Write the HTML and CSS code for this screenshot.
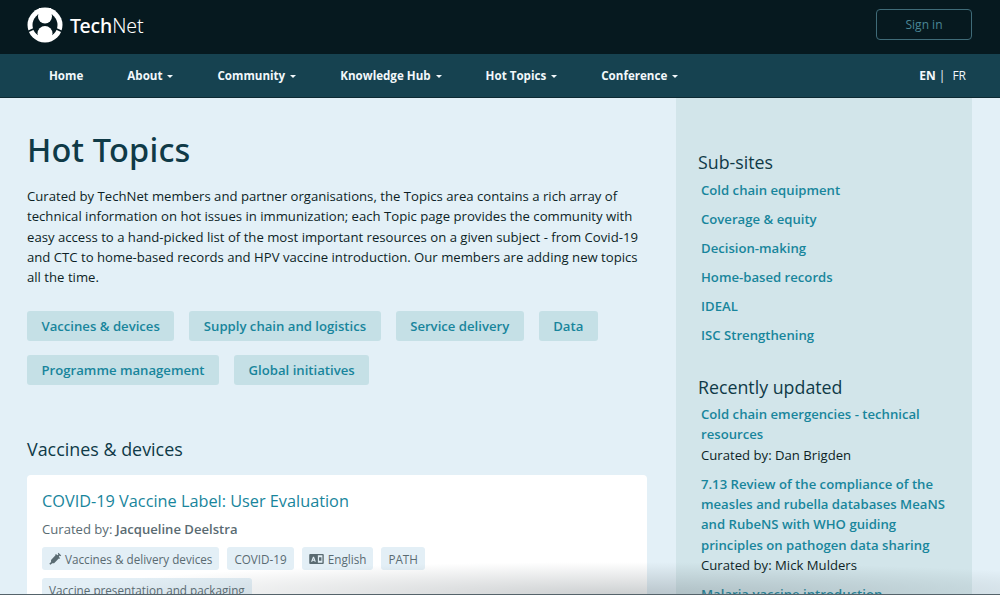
FILE: index.html
```html
<!DOCTYPE html>
<html lang="en">
<head>
<meta charset="utf-8">
<title>Hot Topics - TechNet</title>
<link rel="stylesheet" href="styles.css">
</head>
<body>
<header class="topbar">
  <a class="logo" href="#">
    <svg class="logo-mark" viewBox="0 0 36 36" width="36" height="36" aria-hidden="true">
      <circle cx="18" cy="18" r="17.500" fill="#fff"/>
      <circle cx="18" cy="18" r="12.500" fill="#06191f"/>
      <path d="M1 24.500 7.500 21.500M35 24.500 28.500 21.500" stroke="#06191f" stroke-width="1.800"/>
      <path d="M12 1h12v6H12Z" fill="#fff"/>
      <circle cx="18" cy="9.500" r="7" fill="#fff"/>
      <circle cx="18" cy="26.500" r="7.500" fill="#fff"/>
    </svg>
    <span class="logo-text"><b>Tech</b>Net</span>
  </a>
  <a class="signin" href="#">Sign in</a>
</header>
<nav class="mainnav">
  <ul class="navlist">
    <li><a href="#">Home</a></li>
    <li><a href="#" class="caret">About</a></li>
    <li><a href="#" class="caret">Community</a></li>
    <li><a href="#" class="caret">Knowledge Hub</a></li>
    <li><a href="#" class="caret">Hot Topics</a></li>
    <li><a href="#" class="caret">Conference</a></li>
  </ul>
  <div class="lang"><b>EN</b><span class="sep">|</span><span>FR</span></div>
</nav>
<div class="page">
  <main class="content">
    <h1>Hot Topics</h1>
    <p class="intro">Curated by TechNet members and partner organisations, the Topics area contains a rich array of technical information on hot issues in immunization; each Topic page provides the community with easy access to a hand-picked list of the most important resources on a given subject - from Covid-19 and CTC to home-based records and HPV vaccine introduction. Our members are adding new topics all the time.</p>
    <div class="filters">
      <a href="#">Vaccines &amp; devices</a>
      <a href="#">Supply chain and logistics</a>
      <a href="#">Service delivery</a>
      <a href="#">Data</a>
      <a href="#">Programme management</a>
      <a href="#">Global initiatives</a>
    </div>
    <h2>Vaccines &amp; devices</h2>
    <article class="card">
      <h3><a href="#">COVID-19 Vaccine Label: User Evaluation</a></h3>
      <p class="curator">Curated by: <b>Jacqueline Deelstra</b></p>
      <div class="tags">
        <span class="tag">
          <svg viewBox="0 0 14 14" width="13" height="13" aria-hidden="true"><path d="M10.200.8 13.200 3.800 12.400 4.600 11.700 3.900 10.600 5 12 6.600 11 7.400 10.500 7 5.500 12 3.500 12 1.500 13.800.3 12.600 2.200 10.700 2.200 8.600 7 3.600 6.600 3.100 7.500 2.200 9.100 3.500 10.200 2.400 9.500 1.600Z" fill="#5a6b72"/></svg>
          Vaccines &amp; delivery devices</span>
        <span class="tag">COVID-19</span>
        <span class="tag tag-lang">
          <svg viewBox="0 0 16 11" width="15" height="10" aria-hidden="true"><path fill-rule="evenodd" d="M1 0h14a1 1 0 0 1 1 1v9a1 1 0 0 1-1 1H1a1 1 0 0 1-1-1V1a1 1 0 0 1 1-1Zm8.500 1.500v8h5v-8ZM4.100 3 2 8.500h1.300l.4-1.200h1.900l.4 1.200h1.300L5.300 3ZM4.100 6.200l.5-1.500.5 1.500ZM10.800 3.500h2.600v4h-2.600Z" fill="#5a6b72"/></svg>
          English</span>
        <span class="tag">PATH</span>
        <span class="tag">Vaccine presentation and packaging</span>
      </div>
    </article>
  </main>
  <aside class="sidebar">
    <h2>Sub-sites</h2>
    <ul class="sublinks">
      <li><a href="#">Cold chain equipment</a></li>
      <li><a href="#">Coverage &amp; equity</a></li>
      <li><a href="#">Decision-making</a></li>
      <li><a href="#">Home-based records</a></li>
      <li><a href="#">IDEAL</a></li>
      <li><a href="#">ISC Strengthening</a></li>
    </ul>
    <h2 class="recent-title">Recently updated</h2>
    <ul class="recent">
      <li><a href="#">Cold chain emergencies - technical resources</a><span>Curated by: Dan Brigden</span></li>
      <li><a href="#">7.13 Review of the compliance of the measles and rubella databases MeaNS and RubeNS with WHO guiding principles on pathogen data sharing</a><span>Curated by: Mick Mulders</span></li>
      <li><a href="#">Malaria vaccine introduction</a></li>
    </ul>
  </aside>
</div>
<div class="fade"></div>
</body>
</html>
```
FILE: styles.css
```css
* { box-sizing: border-box; }
html, body { margin: 0; height: 595px; overflow: hidden; }
body { background: #e3f0f7; font-family: "Open Sans", sans-serif; color: #0d2a33; position: relative; }
a { text-decoration: none; color: inherit; }
ul { list-style: none; margin: 0; padding: 0; }

.topbar { height: 54px; background: #06191f; display: flex; align-items: center; justify-content: space-between; padding: 0 28px 4px 27px; }
.logo { display: flex; align-items: center; gap: 7px; }
.logo-mark { display: block; }
.logo-text { font-family: "Noto Sans", sans-serif; font-size: 19.500px; font-weight: 300; color: #fff; letter-spacing: -.1px; }
.logo-text b { font-weight: 500; }
.signin { width: 96px; height: 31px; margin-bottom: 2px; border: 1px solid #3f6b78; border-radius: 4px; color: #4a8696; font-size: 12px; display: flex; align-items: center; justify-content: center; }

.mainnav { height: 44px; background: #164250; border-bottom: 1px solid #0d2a33; display: flex; align-items: center; justify-content: space-between; padding: 0 34px 0 49px; color: #f2f8fb; font-size: 11.600px; font-weight: 700; }
.navlist { display: flex; gap: 44px; }
.caret::after { content: ""; display: inline-block; margin-left: 5px; vertical-align: 2px; border: 3.500px solid transparent; border-top-color: currentColor; border-bottom: 0; }
.lang { font-weight: 400; display: flex; font-size: 12px; }
.lang b { font-weight: 700; }
.sep { margin: 0 7px 0 3px; font-weight: 400; }

.page { display: flex; align-items: flex-start; padding-left: 27px; }
.content { width: 620px; flex: none; }
h1 { margin: 32px 0 0; font-size: 32.500px; line-height: 40px; font-weight: 500; color: #0f3a47; letter-spacing: .2px; font-family: "Noto Sans", sans-serif; }
.intro { margin: 16px 0 0; width: 620px; font-size: 13.150px; line-height: 20.300px; color: #0d1f26; }
.filters { margin-top: 24px; display: flex; flex-wrap: wrap; column-gap: 15px; row-gap: 14px; width: 600px; }
.filters a { height: 30px; padding: 0 14.500px; background: #c5e0e6; border-radius: 3px; color: #18859c; font-size: 13.150px; font-weight: 600; display: flex; align-items: center; }
.content h2 { margin: 51px 0 0; font-size: 17.900px; line-height: 26px; font-weight: 400; color: #0f3a47; }
.card { margin-top: 13px; background: #fff; border-radius: 4px; padding: 14px 15px 20px; height: 160px; }
.card h3 { margin: 0; font-size: 16.300px; line-height: 24px; font-weight: 400; color: #18859c; }
.curator { margin: 6px 0 0; font-size: 13.100px; line-height: 20px; color: #5a6b72; }
.curator b { font-weight: 600; }
.tags { margin-top: 8px; display: flex; flex-wrap: wrap; gap: 8px; font-size: 11.700px; color: #5a6b72; }
.tag { height: 23px; padding: 0 7px; background: #e3eff6; border-radius: 3px; display: flex; align-items: center; gap: 3px; }
.tag-lang { gap: 4px; }

.sidebar { margin-left: 29px; width: 296px; height: 520px; flex: none; background: #d2e5ea; padding: 51px 22px 0; }
.sidebar h2 { margin: 0; font-size: 17.800px; line-height: 26px; font-weight: 400; color: #0f3a47; }
.sublinks { margin-top: 1px; padding-left: 3px; font-size: 13.150px; font-weight: 600; color: #18859c; }
.sublinks li { height: 29px; line-height: 29px; }
.sidebar .recent-title { margin-top: 24px; }
.recent { margin-top: 4px; padding-left: 3px; font-size: 13.150px; line-height: 20.300px; }
.recent li { margin-bottom: 9px; }
.recent a { display: block; color: #18859c; font-weight: 600; }
.recent span { display: block; color: #0d1f26; }

.fade { position: absolute; left: 0; right: 0; bottom: 0; height: 36px; pointer-events: none; border-bottom: 1px solid #55636a; background: radial-gradient(ellipse 560px 32px at 620px 100%, rgba(90,100,105,.3), rgba(90,100,105,0) 100%); }
```
